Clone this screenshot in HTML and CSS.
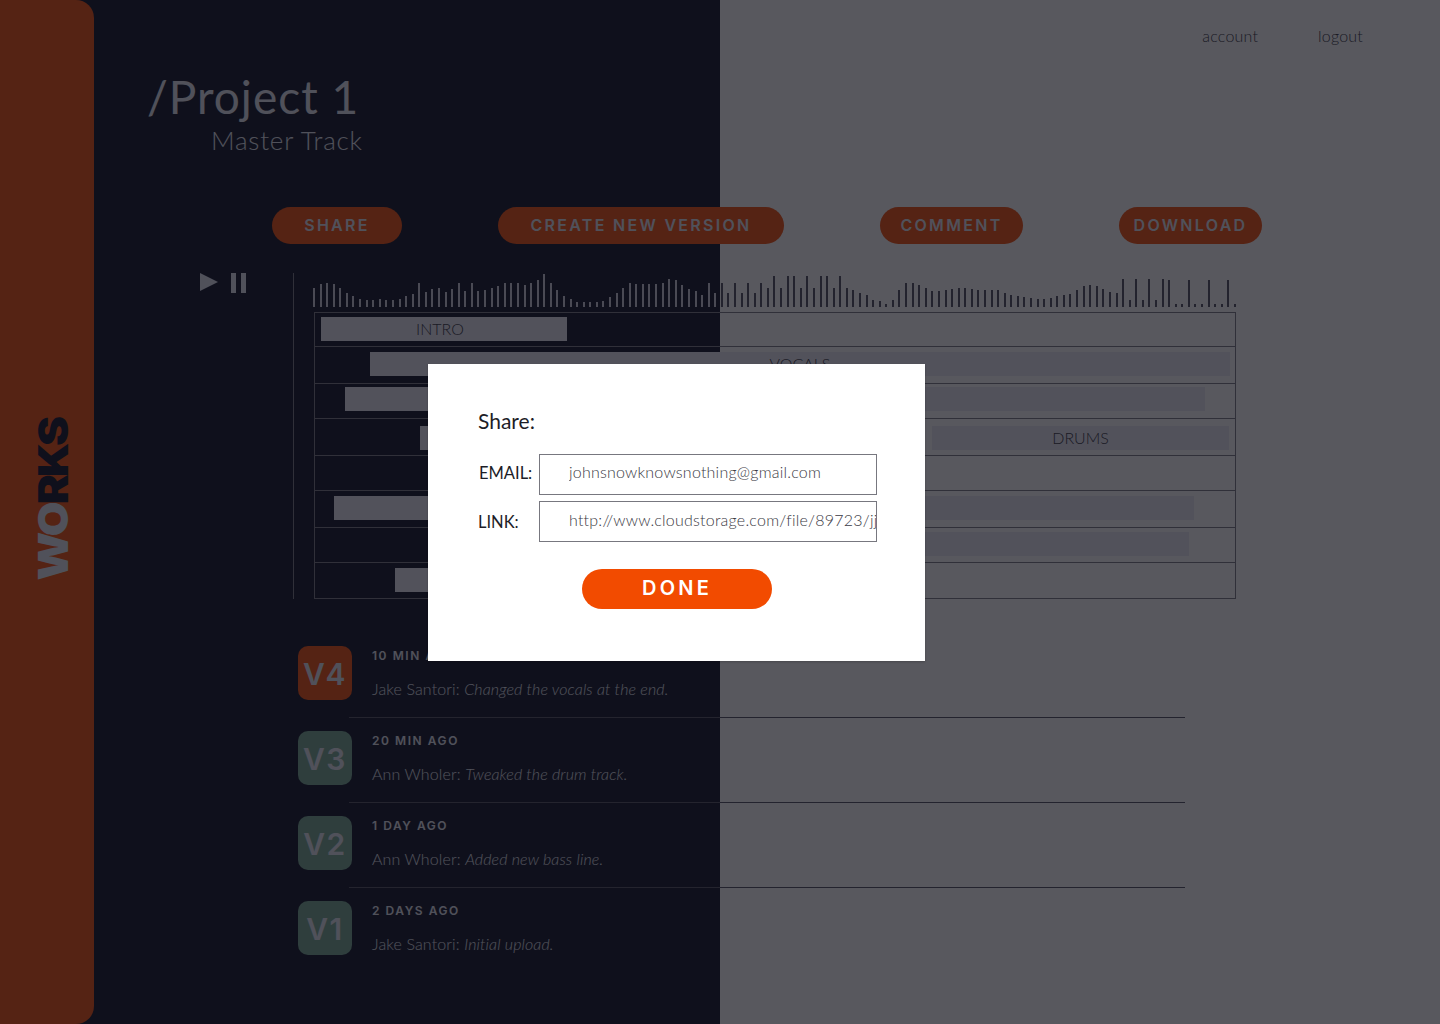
FILE: index.html
```html
<!DOCTYPE html>
<html lang="en">
<head>
    <meta charset="UTF-8">
    <meta name="viewport" content="width=device-width, initial-scale=1.0">
    <title>Works - Project 1</title>
    <link rel="stylesheet" href="styles.css">
</head>
<body>
    <div class="page">
        <aside class="sidebar">
            <div class="logo">WO<span class="logo-dark">RKS</span></div>
        </aside>

        <main class="content">
            <nav class="topnav">
                <a href="#">account</a>
                <a href="#">logout</a>
            </nav>

            <h1 class="project-title">/Project 1</h1>
            <h2 class="project-subtitle">Master Track</h2>

            <div class="actions">
                <button class="action action-share">SHARE</button>
                <button class="action action-create">CREATE NEW VERSION</button>
                <button class="action action-comment">COMMENT</button>
                <button class="action action-download">DOWNLOAD</button>
            </div>

            <section class="player">
                <div class="controls">
                    <svg class="control-icon" width="18" height="18" viewBox="0 0 18 18"><polygon points="0,0 18,9 0,18"/></svg>
                    <svg class="control-icon" width="15" height="20" viewBox="0 0 15 20"><rect x="0" y="0" width="5" height="20"/><rect x="10" y="0" width="5" height="20"/></svg>
                </div>
                <div class="timeline">
                    <div class="waveform" id="waveform"></div>
                    <div class="tracks">
                        <div class="track track-short"><div class="clip clip-intro">INTRO</div></div>
                        <div class="track"><div class="clip clip-vocals">VOCALS</div></div>
                        <div class="track track-short"><div class="clip clip-bass"></div></div>
                        <div class="track"><div class="clip clip-keys"></div><div class="clip clip-drums">DRUMS</div></div>
                        <div class="track track-short"></div>
                        <div class="track"><div class="clip clip-guitar"></div></div>
                        <div class="track track-short"><div class="clip clip-synth"></div></div>
                        <div class="track"><div class="clip clip-outro"></div></div>
                    </div>
                </div>
            </section>

            <ul class="versions">
                <li class="version">
                    <div class="version-badge badge-current">V4</div>
                    <div class="version-body">
                        <div class="version-time">10 MIN AGO</div>
                        <p class="version-note">Jake Santori: <em>Changed the vocals at the end.</em></p>
                    </div>
                </li>
                <li class="version">
                    <div class="version-badge">V3</div>
                    <div class="version-body">
                        <div class="version-time">20 MIN AGO</div>
                        <p class="version-note">Ann Wholer: <em>Tweaked the drum track.</em></p>
                    </div>
                </li>
                <li class="version">
                    <div class="version-badge">V2</div>
                    <div class="version-body">
                        <div class="version-time">1 DAY AGO</div>
                        <p class="version-note">Ann Wholer: <em>Added new bass line.</em></p>
                    </div>
                </li>
                <li class="version version-last">
                    <div class="version-badge">V1</div>
                    <div class="version-body">
                        <div class="version-time">2 DAYS AGO</div>
                        <p class="version-note">Jake Santori: <em>Initial upload.</em></p>
                    </div>
                </li>
            </ul>
        </main>

        <div class="overlay"></div>

        <div class="modal">
            <h3 class="modal-title">Share:</h3>
            <div class="field">
                <label class="field-label" for="shareEmail">EMAIL:</label>
                <input class="field-input" type="text" id="shareEmail" value="johnsnowknowsnothing@gmail.com">
            </div>
            <div class="field field-link">
                <label class="field-label" for="shareLink">LINK:</label>
                <input class="field-input" type="text" id="shareLink" value="http://www.cloudstorage.com/file/89723/jjdk82">
            </div>
            <button class="done-button">DONE</button>
        </div>
    </div>

    <script src="waveform.js"></script>
</body>
</html>
```

FILE: styles.css
```css
* {
    box-sizing: border-box;
}

body {
    margin: 0;
    font-family: "Lato", sans-serif;
    color: #2d2d37;
}

.page {
    position: relative;
    display: flex;
    width: 1440px;
    height: 1024px;
    overflow: hidden;
    background: linear-gradient(90deg, #060a1c 720px, #ffffff 720px);
}

/* Sidebar */
.sidebar {
    display: flex;
    justify-content: center;
    align-items: center;
    flex: 0 0 94px;
    padding: 0 0 25px 12px;
    background-color: #f44800;
    border-radius: 0 18px 18px 0;
}

.logo {
    writing-mode: vertical-rl;
    transform: rotate(180deg) scaleY(1.1);
    font-family: "Inter", sans-serif;
    font-size: 41px;
    font-weight: 900;
    line-height: 1;
    letter-spacing: -2.5px;
    color: #e3e6f2;
}

.logo-dark {
    color: #060a1c;
}

/* Main column */
.content {
    flex: 1;
}

.topnav {
    display: flex;
    justify-content: flex-end;
    gap: 60px;
    padding: 26px 77px 0 0;
}

.topnav a {
    font-size: 16px;
    font-weight: 300;
    line-height: 19px;
    letter-spacing: 0.2px;
    color: #2d2d37;
    text-decoration: none;
}

.project-title {
    margin: 25px 0 0 53px;
    font-size: 46px;
    font-weight: 400;
    line-height: 54px;
    letter-spacing: 1px;
    color: #e3e6f2;
}

.project-subtitle {
    margin: 0 0 0 117px;
    font-size: 26px;
    font-weight: 300;
    line-height: 32px;
    letter-spacing: 0.8px;
    color: #e3e6f2;
}

.actions {
    display: flex;
    gap: 96px;
    margin: 51px 0 0 178px;
}

.action {
    height: 37px;
    padding: 0 0 2px;
    border: none;
    border-radius: 19px;
    background-color: #f44800;
    font-family: "Inter", sans-serif;
    font-size: 16px;
    font-weight: 600;
    letter-spacing: 2.3px;
    color: #e3e6f2;
}

.action-share {
    width: 130px;
}

.action-create {
    width: 286px;
}

.action-comment {
    width: 143px;
}

.action-download {
    width: 143px;
}

/* Player */
.player {
    display: flex;
    margin: 29px 0 0 106px;
}

.controls {
    display: flex;
    align-items: flex-start;
    gap: 13px;
    flex: 0 0 93px;
}

.control-icon {
    fill: #e3e6f2;
}

.timeline {
    width: 943px;
    padding-left: 20px;
    border-left: 1px solid #75757f;
}

.waveform {
    display: flex;
    justify-content: space-between;
    align-items: flex-end;
    height: 34px;
    margin: 0 0 5px -1px;
}

.wave-bar {
    flex: 0 0 2px;
    background-color: #ceceDD;
}

.wave-bar-dark {
    background-color: #4b4b5a;
}

.tracks {
    width: 922px;
    border: 1px solid #75757f;
}

.track {
    display: flex;
    align-items: flex-start;
    height: 36px;
    border-top: 1px solid #75757f;
}

.track-short {
    height: 35px;
}

.track:first-child {
    height: 33px;
    border-top: none;
}

.track:nth-child(2),
.track:nth-child(4),
.track:nth-child(6) {
    height: 37px;
}

.clip {
    height: 24px;
    background-color: #eaeaf5;
    font-size: 16px;
    font-weight: 300;
    line-height: 24px;
    text-align: center;
    color: #2d2d37;
}

.clip-intro {
    width: 246px;
    margin: 4px 0 0 6px;
    padding-right: 8px;
}

.clip-vocals {
    width: 860px;
    margin: 5px 0 0 55px;
}

.clip-bass {
    width: 860px;
    margin: 3px 0 0 30px;
}

.clip-keys {
    width: 380px;
    margin: 7px 0 0 105px;
}

.clip-drums {
    width: 297px;
    margin: 7px 0 0 132px;
}

.clip-guitar {
    width: 860px;
    margin: 5px 0 0 19px;
}

.clip-synth {
    width: 589px;
    margin: 4px 0 0 285px;
}

.clip-outro {
    width: 300px;
    margin: 5px 0 0 80px;
}

/* Version history */
.versions {
    list-style: none;
    margin: 47px 0 0 204px;
    padding: 0;
}

.version {
    display: flex;
    height: 85px;
}

.version-badge {
    flex: 0 0 54px;
    height: 54px;
    background-color: #71a58e;
    border-radius: 10px;
    font-family: "Inter", sans-serif;
    font-size: 30px;
    font-weight: 600;
    line-height: 57px;
    letter-spacing: 1.5px;
    text-align: center;
    color: #e3e6f2;
}

.badge-current {
    background-color: #f44800;
}

.version-body {
    width: 836px;
    height: 72px;
    margin-left: -3px;
    padding-left: 23px;
    border-bottom: 1px solid #4b4b5a;
    border-image: linear-gradient(90deg, #4e4e5c 371px, #4b4b5a 371px) 1;
}

.version-last .version-body {
    border-bottom: none;
}

.version-time {
    font-family: "Inter", sans-serif;
    font-size: 12px;
    font-weight: 600;
    line-height: 20px;
    letter-spacing: 1.55px;
    color: #e3e6f2;
}

.version-note {
    margin: 13px 0 0;
    font-size: 16px;
    font-weight: 300;
    line-height: 20px;
    letter-spacing: 0.12px;
    color: #e3e6f2;
}

.version-note em {
    font-style: italic;
}

/* Share dialog */
.overlay {
    position: absolute;
    inset: 0;
    background-color: rgba(20, 20, 28, 0.71);
}

.modal {
    position: absolute;
    top: 364px;
    left: 428px;
    width: 497px;
    height: 297px;
    padding: 43px 48px 0 50px;
    background-color: #ffffff;
    box-shadow: 0 1px 2px rgba(0, 0, 0, 0.2);
}

.modal-title {
    margin: 0 0 20px;
    font-size: 21px;
    font-weight: 400;
    line-height: 27px;
    color: #1d1d27;
}

.field {
    display: flex;
    align-items: center;
    margin-bottom: 6px;
}

.field-label {
    flex: 0 0 61px;
    padding: 0 0 3px 1px;
    font-size: 16.5px;
    font-weight: 400;
    color: #1d1d27;
}

.field-input {
    width: 338px;
    height: 41px;
    padding: 0 0 6px 29px;
    border: 1px solid #77777f;
    border-radius: 0;
    background: #ffffff;
    font-family: "Lato", sans-serif;
    font-size: 16px;
    font-weight: 300;
    letter-spacing: 0.22px;
    color: #3a3a44;
}

.field-link .field-label {
    padding: 0;
}

.field-link .field-input {
    padding-bottom: 4px;
}

.done-button {
    display: block;
    width: 190px;
    height: 40px;
    margin: 27px 0 0 104px;
    padding: 0 0 2px;
    border: none;
    border-radius: 20px;
    background-color: #f24b00;
    font-family: "Inter", sans-serif;
    font-size: 20px;
    font-weight: 600;
    letter-spacing: 3.2px;
    color: #ffffff;
}
```

FILE: waveform.js
```js
// Bar heights in px, left to right
const heights = [
    19, 23, 24, 23, 19, 14, 11, 8, 7, 7, 8, 7, 7, 8, 11, 13, 24, 15, 18, 19,
    15, 18, 24, 16, 24, 16, 17, 19, 21, 24, 24, 24, 22, 24, 27, 33, 24, 17, 11, 8,
    5, 5, 5, 5, 6, 10, 14, 19, 24, 23, 23, 23, 23, 24, 28, 27, 22, 18, 16,
    12, 24, 14, 24, 14, 24, 14, 24, 14, 24, 19, 31, 19, 31, 31, 19, 31, 19, 31, 31,
    19, 31, 19, 17, 14, 12, 7, 6, 3, 7, 17, 24, 24, 22, 19, 16, 16, 17, 18, 19, 19,
    18, 17, 17, 17, 17, 14, 12, 11, 10, 9, 8, 8, 9, 11, 12, 13, 17, 21, 22, 21, 18,
    15, 14, 28, 7, 28, 7, 28, 7, 28, 27, 3, 3, 27, 3, 3, 27, 3, 3, 27, 3
];

const waveform = document.getElementById('waveform');

heights.forEach((height, index) => {
    const bar = document.createElement('span');
    // Bars past the middle of the page sit on the light half
    bar.className = index >= 62 ? 'wave-bar wave-bar-dark' : 'wave-bar';
    bar.style.height = `${height}px`;
    waveform.appendChild(bar);
});
```
